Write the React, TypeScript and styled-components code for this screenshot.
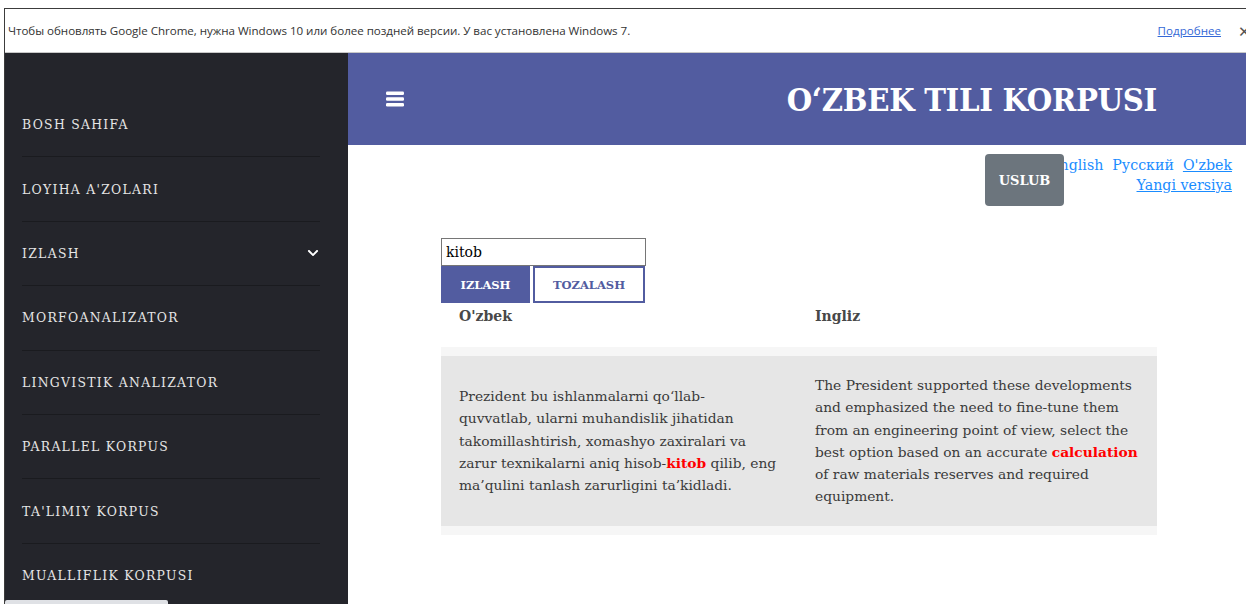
import React from "react";
import styled, { createGlobalStyle } from "styled-components";
import { FaChevronDown } from "react-icons/fa";

const SLAB = `"DejaVu Serif", "Liberation Serif", serif`;
const BRAND = "#525ca0";

const Global = createGlobalStyle`
  html, body { margin: 0; padding: 0; background: #fff; }
  body { width: 1246px; height: 604px; overflow: hidden; }
  * { box-sizing: border-box; }
`;

const Frame = styled.div`
  padding: 8px 0 0 4px;
  height: 604px;
  background: #fff;
`;

const Window = styled.div`
  height: 596px;
  border-top: 1px solid #3c3c3c;
  border-left: 1px solid #3c3c3c;
  display: flex;
  flex-direction: column;
  overflow: hidden;
`;

const InfoBar = styled.div`
  height: 44px;
  flex: none;
  display: flex;
  align-items: center;
  padding: 0 0 0 3px;
  border-bottom: 1px solid #c8c8c8;
  font-family: "Open Sans", "Noto Sans", sans-serif;
  font-size: 11.6px;
  color: #333;
`;

const InfoText = styled.span`
  flex: 1;
  letter-spacing: -0.04px;
`;

const InfoLink = styled.a`
  color: #3367d6;
  text-decoration: underline;
  margin-right: 17px;
  cursor: pointer;
`;

const InfoClose = styled.span`
  font-size: 15px;
  color: #555;
  width: 8px;
  overflow: hidden;
`;

const Main = styled.div`
  flex: 1;
  display: flex;
  min-height: 0;
`;

const Sidebar = styled.nav`
  position: relative;
  width: 343px;
  flex: none;
  background: #24252b;
  padding: 40px 28px 0 17px;
`;

const NavItem = styled.div`
  height: 64.4px;
  display: flex;
  align-items: center;
  justify-content: space-between;
  border-bottom: 1px solid #1a1b1f;
  font-family: ${SLAB};
  font-size: 12.4px;
  letter-spacing: 1.3px;
  color: #e6e6e6;
  &:last-child { border-bottom: none; }
`;

const Chevron = styled.span`
  display: flex;
  color: #fff;
  margin-right: 1px;
`;

const StatusBubble = styled.div`
  position: absolute;
  left: 0;
  bottom: 0;
  width: 163px;
  height: 4px;
  background: #dfe1e5;
  border-radius: 2px 2px 0 0;
`;

const Content = styled.div`
  flex: 1;
  display: flex;
  flex-direction: column;
`;

const Header = styled.header`
  height: 92px;
  flex: none;
  background: ${BRAND};
  display: flex;
  align-items: center;
  justify-content: space-between;
  padding: 0 89px 0 38px;
`;

const Burger = styled.svg`
  width: 18px;
  height: 16px;
`;

const Title = styled.h1`
  margin: 0;
  font-family: ${SLAB};
  font-weight: bold;
  font-stretch: condensed;
  font-size: 32.5px;
  letter-spacing: -0.3px;
  color: #fff;
`;

const TopRow = styled.div`
  position: relative;
  display: flex;
  justify-content: flex-end;
  padding: 10px 14px 0 0;
  height: 93px;
`;

const Langs = styled.div`
  display: flex;
  flex-direction: column;
  align-items: flex-end;
  font-family: ${SLAB};
  font-size: 14.2px;
  line-height: 20px;
`;

const LangLine = styled.div`
  display: flex;
  gap: 9px;
`;

const LangLink = styled.a<{ $u?: boolean }>`
  color: #1a8cff;
  text-decoration: ${(p) => (p.$u ? "underline" : "none")};
  cursor: pointer;
`;

const StyleButton = styled.button`
  position: absolute;
  top: 9px;
  right: 182px;
  width: 79px;
  height: 52px;
  border: none;
  border-radius: 4px;
  background: #6c757d;
  color: #fff;
  font-family: ${SLAB};
  font-weight: bold;
  font-size: 13px;
  padding-top: 1px;
`;

const Panel = styled.div`
  width: 716px;
  margin-left: 93px;
`;

const SearchInput = styled.input`
  display: block;
  width: 205px;
  height: 28px;
  border: 1px solid #767676;
  padding: 0 4px;
  font-family: ${SLAB};
  font-size: 14px;
  color: #000;
  outline: none;
`;

const Buttons = styled.div`
  display: flex;
  gap: 3px;
`;

const ActionButton = styled.button<{ $outline?: boolean }>`
  height: 37px;
  width: ${(p) => (p.$outline ? "112px" : "89px")};
  background: ${(p) => (p.$outline ? "#fff" : BRAND)};
  color: ${(p) => (p.$outline ? BRAND : "#fff")};
  border: ${(p) => (p.$outline ? `2px solid ${BRAND}` : "none")};
  font-family: ${SLAB};
  font-weight: bold;
  font-size: 11.5px;
  padding: 0;
`;

const HeadRow = styled.div`
  display: grid;
  grid-template-columns: 356px 1fr;
  padding-top: 2px;
  margin-bottom: 20px;
`;

const HeadCell = styled.div`
  padding: 0 18px;
  line-height: 22px;
  font-family: ${SLAB};
  font-weight: bold;
  font-size: 14px;
  color: #484848;
`;

const Table = styled.div`
  display: grid;
  grid-template-columns: 356px 1fr;
  background: #e6e6e6;
  border-top: 9px solid #f6f6f6;
  border-bottom: 9px solid #f6f6f6;
`;

const Cell = styled.div`
  padding: 18px 16px 18px 18px;
  display: flex;
  align-items: center;
  font-family: ${SLAB};
  font-size: 13.8px;
  line-height: 22.3px;
  color: #3a3a3a;
`;

const Hit = styled.b`
  color: #ff0000;
`;

const navItems = [
  "BOSH SAHIFA",
  "LOYIHA A'ZOLARI",
  "IZLASH",
  "MORFOANALIZATOR",
  "LINGVISTIK ANALIZATOR",
  "PARALLEL KORPUS",
  "TA'LIMIY KORPUS",
  "MUALLIFLIK KORPUSI",
];

export default function App() {
  return (
    <>
      <Global />
      <Frame>
        <Window>
          <InfoBar>
            <InfoText>
              Чтобы обновлять Google Chrome, нужна Windows 10 или более поздней версии. У вас установлена Windows 7.
            </InfoText>
            <InfoLink>Подробнее</InfoLink>
            <InfoClose>✕</InfoClose>
          </InfoBar>
          <Main>
            <Sidebar>
              {navItems.map((item) => (
                <NavItem key={item}>
                  <span>{item}</span>
                  {item === "IZLASH" && (
                    <Chevron>
                      <FaChevronDown size={12} />
                    </Chevron>
                  )}
                </NavItem>
              ))}
              <StatusBubble />
            </Sidebar>
            <Content>
              <Header>
                <Burger viewBox="0 0 18 16">
                  <rect x="0" y="0.5" width="18" height="3.4" rx="1.2" fill="#fff" />
                  <rect x="0" y="6.3" width="18" height="3.4" rx="1.2" fill="#fff" />
                  <rect x="0" y="12.1" width="18" height="3.4" rx="1.2" fill="#fff" />
                </Burger>
                <Title>O‘ZBEK TILI KORPUSI</Title>
              </Header>
              <TopRow>
                <Langs>
                  <LangLine>
                    <LangLink>English</LangLink>
                    <LangLink>Русский</LangLink>
                    <LangLink $u>O'zbek</LangLink>
                  </LangLine>
                  <LangLink $u>Yangi versiya</LangLink>
                </Langs>
                <StyleButton>USLUB</StyleButton>
              </TopRow>
              <Panel>
                <SearchInput defaultValue="kitob" />
                <Buttons>
                  <ActionButton>IZLASH</ActionButton>
                  <ActionButton $outline>TOZALASH</ActionButton>
                </Buttons>
                <HeadRow>
                  <HeadCell>O'zbek</HeadCell>
                  <HeadCell>Ingliz</HeadCell>
                </HeadRow>
                <Table>
                  <Cell>
                    <div>
                      Prezident bu ishlanmalarni qo‘llab-
                      <br />
                      quvvatlab, ularni muhandislik jihatidan
                      <br />
                      takomillashtirish, xomashyo zaxiralari va
                      <br />
                      zarur texnikalarni aniq hisob-<Hit>kitob</Hit> qilib, eng
                      <br />
                      ma’qulini tanlash zarurligini ta’kidladi.
                    </div>
                  </Cell>
                  <Cell>
                    <div>
                      The President supported these developments and emphasized the need to
                      fine-tune them from an engineering point of view, select the best option
                      based on an accurate <Hit>calculation</Hit> of raw materials reserves and
                      required equipment.
                    </div>
                  </Cell>
                </Table>
              </Panel>
            </Content>
          </Main>
        </Window>
      </Frame>
    </>
  );
}
